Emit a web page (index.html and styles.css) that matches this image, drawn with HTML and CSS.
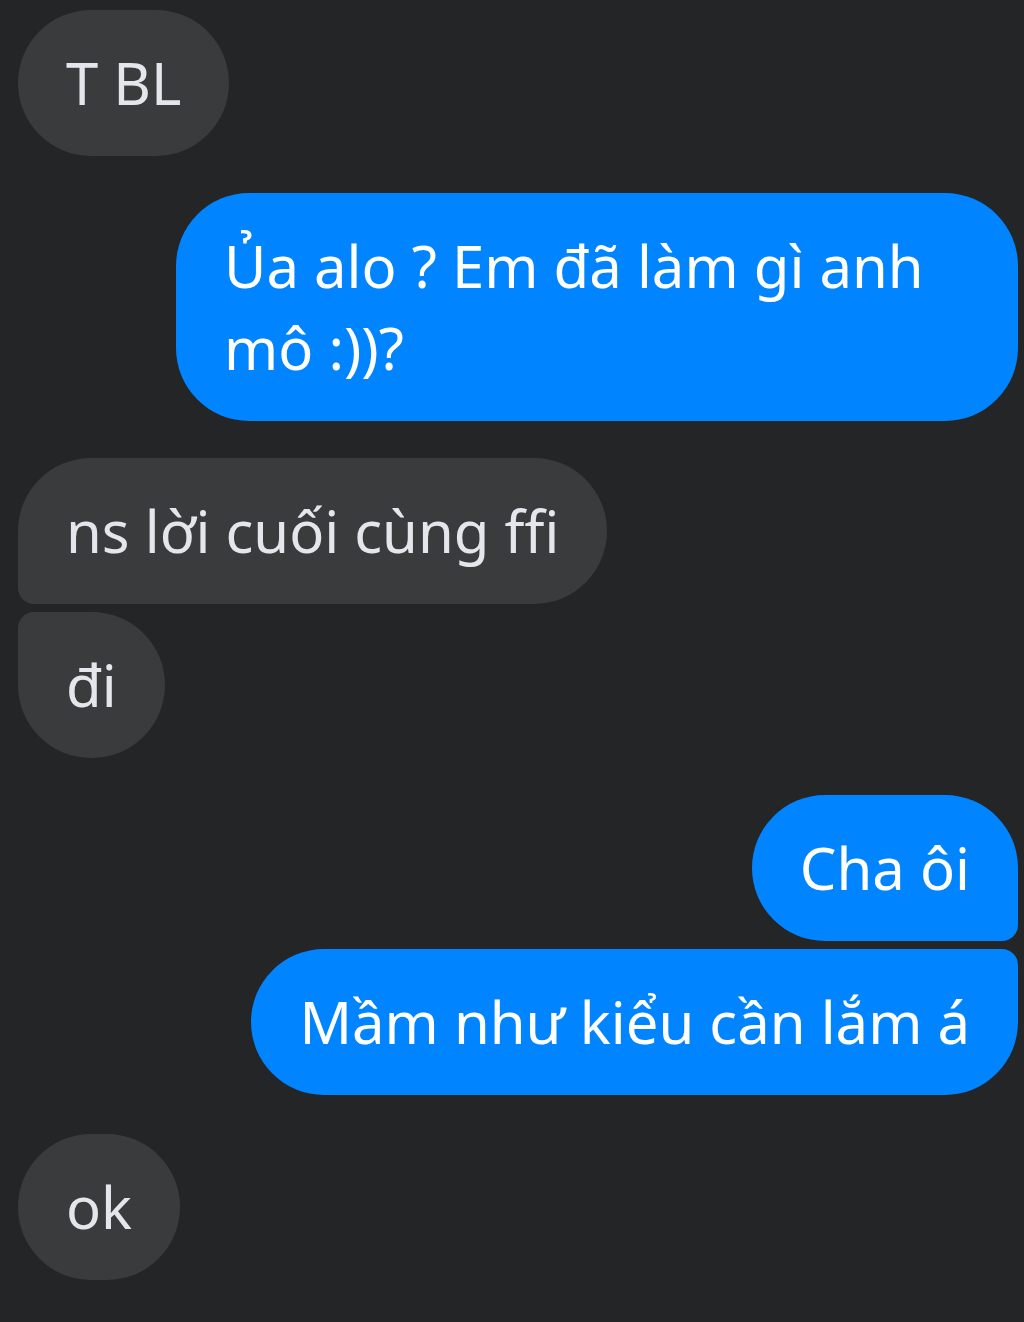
FILE: index.html
```html
<!DOCTYPE html>
<html lang="vi">
<head>
<meta charset="utf-8">
<link rel="stylesheet" href="styles.css">
</head>
<body>
<div class="chat">
  <div class="row in"><div class="bubble in solo">T BL</div></div>
  <div class="row out gap"><div class="bubble out solo">Ủa alo ? Em đã làm gì anh mô :))?</div></div>
  <div class="row in gap"><div class="bubble in first">ns lời cuối cùng ffi</div></div>
  <div class="row in tight"><div class="bubble in last">đi</div></div>
  <div class="row out gap"><div class="bubble out first">Cha ôi</div></div>
  <div class="row out tight"><div class="bubble out last">Mầm như kiểu cần lắm á</div></div>
  <div class="row in gap wide"><div class="bubble in solo">ok</div></div>
</div>
</body>
</html>
```

FILE: styles.css
```css
html, body {
  margin: 0;
  padding: 0;
  background: #242527;
  height: 100%;
}
.chat {
  display: flex;
  flex-direction: column;
  padding: 10px 6px 0 18px;
  font-family: "Noto Sans", "Open Sans", sans-serif;
  font-size: 58px;
}
.row {
  display: flex;
}
.row.in { justify-content: flex-start; }
.row.out { justify-content: flex-end; }
.row.gap { margin-top: 37px; }
.row.gap.wide { margin-top: 39px; }
.row.tight { margin-top: 8px; }
.bubble {
  max-width: 842px;
  box-sizing: border-box;
  padding: 32px 48px;
  line-height: 82px;
  border-radius: 73px;
}
.bubble.in {
  background: #3a3b3d;
  color: #e4e6eb;
}
.bubble.out {
  background: #0084ff;
  color: #ffffff;
}
.bubble.in.first { border-bottom-left-radius: 16px; }
.bubble.in.last { border-top-left-radius: 16px; }
.bubble.out.first { border-bottom-right-radius: 16px; }
.bubble.out.last { border-top-right-radius: 16px; }
```
